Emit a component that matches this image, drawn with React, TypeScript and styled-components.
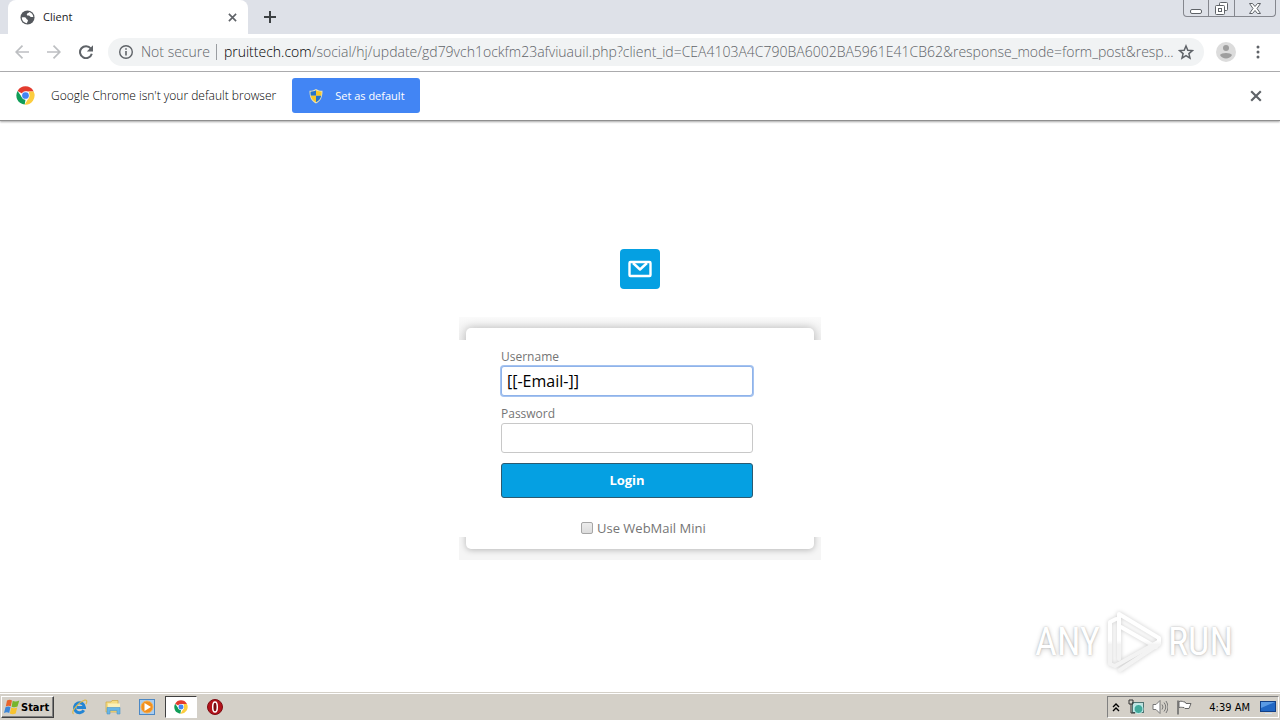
import React, { useState } from "react";
import styled, { createGlobalStyle, css } from "styled-components";

const uiFont = `"Open Sans", "Noto Sans", sans-serif`;

const GlobalStyle = createGlobalStyle`
  *, *::before, *::after { box-sizing: border-box; }
  body { margin: 0; background: #fff; font-family: ${uiFont}; color: #202124; }
  button, input { font-family: inherit; }
`;

const Screen = styled.div`
  min-height: 100vh;
  display: flex;
  flex-direction: column;
`;

const plainButton = css`
  display: flex;
  align-items: center;
  justify-content: center;
  padding: 0;
  border: 0;
  background: none;
  color: #5f6368;
`;

/* Tab strip */

const TabStrip = styled.header`
  display: flex;
  align-items: stretch;
  height: 34px;
  padding-left: 8px;
  background: #dee1e8;
`;

const Tab = styled.div`
  display: flex;
  align-items: center;
  gap: 8px;
  width: 240px;
  padding: 0 8px 0 12px;
  border-radius: 8px 8px 0 0;
  background: #fff;
  font-size: 11px;
  line-height: 16px;
`;

const TabTitle = styled.span`
  flex: 1;
`;

const IconButton = styled.button<{ $size?: number; $color?: string }>`
  ${plainButton}
  width: ${(p) => p.$size ?? 16}px;
  color: ${(p) => p.$color ?? "#5f6368"};
`;

const WindowButtons = styled.div`
  display: flex;
  height: 17px;
  margin: 0 4px 0 auto;
  border: 1px solid #85878e;
  border-top: 0;
  border-radius: 0 0 4px 4px;
`;

const WindowButton = styled.button<{ $width: number }>`
  ${plainButton}
  width: ${(p) => p.$width}px;
  & + & { border-left: 1px solid #85878e; }
`;

/* Toolbar */

const Toolbar = styled.nav`
  display: flex;
  align-items: center;
  height: 38px;
  padding: 0 12px 1px;
  border-bottom: 1px solid #b0b0b2;
`;

const NavButtons = styled.div`
  display: flex;
  gap: 12px;
  margin-right: 12px;
`;

const AddressBar = styled.div`
  flex: 1;
  min-width: 0;
  display: flex;
  align-items: center;
  height: 28px;
  padding: 0 8px 0 9px;
  border-radius: 14px;
  background: #f1f3f4;
  font-size: 14px;
  font-weight: 300;
  line-height: 20px;
  color: #5f6368;
  white-space: nowrap;
`;

const Security = styled.span`
  display: flex;
  align-items: center;
  gap: 6px;

  &::after {
    content: "";
    width: 1px;
    height: 16px;
    margin-right: 7px;
    background: #9a9da1;
  }
`;

const Url = styled.span`
  flex: 1;
`;

const Host = styled.span`
  color: #000;
`;

const ToolbarEnd = styled.div`
  display: flex;
  align-items: center;
  gap: 12px;
  margin-left: 12px;
`;

/* Info bar */

const InfoBar = styled.section`
  display: flex;
  align-items: center;
  height: 49px;
  padding: 0 16px 1px;
  border-bottom: 1px solid #8f8f8f;
  box-shadow: 0 1px 2px rgba(0, 0, 0, 0.35);
  font-size: 12px;
`;

const InfoText = styled.span`
  margin: 0 16px;
  font-weight: 300;
  color: #000;
`;

const DefaultButton = styled.button`
  display: flex;
  align-items: center;
  gap: 11px;
  height: 35px;
  padding: 0 15px 0 16px;
  border: 0;
  border-radius: 3px;
  background: #4285f4;
  color: #fff;
  font-size: 11px;
`;

const InfoClose = styled.div`
  margin-left: auto;
`;

/* Login page */

const Page = styled.main`
  position: relative;
  flex: 1;
  display: flex;
  flex-direction: column;
  align-items: center;
  padding: 128px 0 0;
`;

const MailLogo = styled.div`
  display: flex;
  align-items: center;
  justify-content: center;
  width: 40px;
  height: 40px;
  margin-bottom: 28px;
  border-radius: 4px;
  background: #05a0e2;
`;

const Card = styled.div`
  width: 362px;
`;

const CardEdge = styled.div<{ $bottom?: boolean }>`
  display: flex;
  align-items: ${(p) => (p.$bottom ? "flex-end" : "flex-start")};
  height: 23px;
  padding: ${(p) => (p.$bottom ? "0 7px 11px" : "11px 7px 0")};
  overflow: hidden;
  background: ${(p) => (p.$bottom ? "#f5f5f5" : "linear-gradient(#fafafa, #f0f0f0)")};

  &::before {
    content: "";
    flex: 1 0 auto;
    height: 40px;
    border-radius: 5px;
    background: #fff;
    box-shadow: 0 ${(p) => (p.$bottom ? "1px 6px" : "0 10px")} rgba(0, 0, 0, 0.26);
  }
`;

const Form = styled.form`
  display: flex;
  flex-direction: column;
  width: 294px;
  padding: 8px 0 0 42px;
`;

const Label = styled.label`
  font-size: 12px;
  line-height: 18px;
  color: #757575;
`;

const Field = styled.input`
  height: 30px;
  margin-bottom: 9px;
  padding: 0 5px;
  border: 1px solid #c8c8c8;
  border-radius: 3px;
  background: #fff;
  color: #000;
  font-size: 16px;

  &[type="text"] {
    border-color: #8fb3ea;
    box-shadow: 0 0 0 1px #a5c3f0;
  }
  &:focus { outline: none; }
`;

const LoginButton = styled.button`
  height: 35px;
  margin: 1px 0 21px;
  padding-bottom: 2px;
  border: 1px solid #2c5a70;
  border-radius: 3px;
  background: #05a0e2;
  color: #fff;
  font-size: 13px;
  font-weight: 700;
`;

const MiniRow = styled.label`
  display: flex;
  align-items: center;
  gap: 4px;
  height: 18px;
  padding: 0 0 1px 80px;
  font-size: 13px;
  color: #757575;
  white-space: nowrap;
`;

const Tick = styled.input`
  appearance: none;
  width: 12px;
  height: 12px;
  margin: 0;
  border: 1px solid #a6a6a6;
  border-radius: 2px;
  background: linear-gradient(#ececec, #dcdcdc);
  &:checked { background: #05a0e2; }
`;

const Watermark = styled.div`
  position: absolute;
  right: 47px;
  bottom: 18px;
  display: flex;
  align-items: center;
  gap: 6px;
  color: #fff;
  font-family: "Liberation Sans Narrow", "Roboto Condensed", "Liberation Sans", sans-serif;
  font-size: 38px;
  line-height: 64px;
  text-shadow: 0 0 2px rgba(0, 0, 0, 0.25), 0 1px 5px rgba(0, 0, 0, 0.2);
`;

const PlayMark = styled.svg`
  filter: drop-shadow(0 0 2px rgba(0, 0, 0, 0.2));
`;

/* Taskbar */

const Taskbar = styled.footer`
  display: flex;
  align-items: center;
  height: 28px;
  padding: 1px 1px 0;
  border-top: 1px solid #d4d0c8;
  background: #d4d0c8;
  box-shadow: inset 0 1px 0 #fff;
`;

const StartButton = styled.button`
  display: flex;
  align-items: center;
  gap: 1px;
  height: 22px;
  padding: 0 4px 0 2px;
  border: 1px solid;
  border-color: #fff #404040 #404040 #fff;
  background: #d4d0c8;
  box-shadow: inset -1px -1px 0 #808080;
  color: #000;
  font-family: "DejaVu Sans Condensed", "DejaVu Sans", sans-serif;
  font-size: 11px;
  font-weight: 700;
`;

const QuickLaunch = styled.div`
  display: flex;
  align-items: center;
  margin-left: 8px;
`;

const Launcher = styled.button<{ $active?: boolean }>`
  ${plainButton}
  width: ${(p) => (p.$active ? 32 : 34)}px;
  height: 22px;
  ${(p) =>
    p.$active &&
    css`
      margin: 0 1px;
      border: 1px solid;
      border-color: #404040 #fff #fff #404040;
      background: #fff;
    `}
`;

const Tray = styled.div`
  display: flex;
  align-items: center;
  gap: 8px;
  height: 22px;
  margin-left: auto;
  padding: 0 2px 0 4px;
  border: 1px solid;
  border-color: #808080 #fff #fff #808080;
  color: #000;
  font-family: "DejaVu Sans Condensed", "DejaVu Sans", sans-serif;
  font-size: 11px;
`;

const Clock = styled.time`
  margin: 0 2px 0 8px;
`;

interface SvgProps {
  w?: number;
  h?: number;
  box?: string;
  children: React.ReactNode;
}

const Svg = ({ w = 16, h = w, box = `0 0 ${w} ${h}`, children }: SvgProps) => (
  <svg width={w} height={h} viewBox={box} fill="none" stroke="currentColor" aria-hidden="true">
    {children}
  </svg>
);

const Cross = ({ size = 10 }: { size?: number }) => (
  <Svg w={size} box="0 0 10 10">
    <path d="M1 1l8 8M9 1l-8 8" strokeWidth="1.8" />
  </Svg>
);

const ChromeLogo = ({ size }: { size: number }) => (
  <Svg w={size} box="0 0 48 48">
    <g stroke="none">
      <path d="M24 24L4 12.500A23 23 0 0 1 44 12.500L44.500 14H24z" fill="#e33b2e" />
      <path d="M4 12.500L15.300 29 24 34 22 47A23 23 0 0 1 4 12.500z" fill="#109d58" />
      <path d="M44.500 14A23 23 0 0 1 22 47l10.700-18V14z" fill="#fccd3f" />
      <circle cx="24" cy="24" r="10.500" fill="#f4f8ff" />
      <circle cx="24" cy="24" r="8.500" fill="#4285f4" />
    </g>
  </Svg>
);

const ShieldIcon = () => (
  <Svg w={16}>
    <g stroke="none">
      <path d="M8 1c2 1.300 4 1.800 6.500 1.800C14.500 9 13 13 8 15.500 3 13 1.500 9 1.500 2.800 4 2.800 6 2.300 8 1z" fill="#e8e2b8" />
      <path d="M8 2.300v5.500H2.800c-.3-1.300-.3-2.500-.3-4C4.500 3.700 6.300 3.300 8 2.300z" fill="#2674cc" />
      <path d="M8 2.300c1.700 1 3.500 1.400 5.500 1.500 0 1.500 0 2.700-.3 4H8z" fill="#f8c828" />
      <path d="M2.800 7.800H8v6.500C5 12.800 3.300 10.500 2.800 7.800z" fill="#f8c828" />
      <path d="M13.200 7.800H8v6.500c3-1.500 4.700-3.800 5.200-6.500z" fill="#2674cc" />
    </g>
  </Svg>
);

const WindowsFlag = () => (
  <Svg w={16}>
    <g stroke="none">
      <path d="M3 1.500C5 .3 6.600.5 8 1.400L6.800 7.300C5.300 6.400 3.700 6.400 1.800 7.400z" fill="#e8642c" />
      <path d="M8.700 1.800c1.700.9 3.900.9 6.600-.2l-1.800 6c-2 1-3.900 1-5.900.1z" fill="#77b52d" />
      <path d="M1.500 8.200c1.900-1 3.500-1 5-.1l-1.300 5.900c-1.500-.9-3.400-.9-5.200.1z" fill="#3c86d8" />
      <path d="M7.300 8.500c1.800.9 3.700.9 5.900-.1l-1.500 6c-2 1-3.900 1-5.900.1z" fill="#f8c32e" />
    </g>
  </Svg>
);

export default function App() {
  const [email, setEmail] = useState("[[-Email-]]");
  return (
    <Screen>
      <GlobalStyle />
      <TabStrip>
        <Tab>
          <Svg w={15} box="0 0 16 16">
            <circle cx="8" cy="8" r="7.500" fill="#54585d" stroke="none" />
            <path d="M1.900 8c2-.5 4.600-.3 4.900 1.200.2 1.100 1.700.6 1.700 1.900 0 1-.9 1.300-1 2.900C4.200 13.800 2 11.300 1.900 8zM9.800 2.200C9.500 3.700 7.600 3 7.300 4.400c-.2 1.100.5 1.700 1.700 1.500 1.600-.2 1.600 1.300 2.700 1.500.9.200 1.700-.2 2.500.1C14 5 12.300 2.900 9.800 2.200z" fill="#fff" stroke="none" />
          </Svg>
          <TabTitle>Client</TabTitle>
          <IconButton aria-label="Close tab"><Cross size={9} /></IconButton>
        </Tab>
        <IconButton $size={44} $color="#3c4043" aria-label="New tab">
          <Svg w={12}><path d="M6 0v12M0 6h12" strokeWidth="2" /></Svg>
        </IconButton>
        <WindowButtons>
          <WindowButton $width={24} aria-label="Minimize">
            <Svg w={12} h={12}><rect x=".5" y="7.500" width="11" height="4" rx="1.500" fill="#fff" /></Svg>
          </WindowButton>
          <WindowButton $width={26} aria-label="Restore">
            <Svg w={13}><rect x="4.500" y=".5" width="8" height="8" rx="1" fill="#fff" /><rect x=".5" y="3.500" width="9" height="9" rx="1" fill="#fff" /><rect x="3.500" y="6.500" width="3" height="3" /></Svg>
          </WindowButton>
          <WindowButton $width={41} aria-label="Close">
            <Svg w={12} h={11}><path d="M.5.5h3L6 3.500 8.500.5h3L8 5.500l3.500 5h-3L6 7.500l-2.500 3h-3L4 5.500z" fill="#fff" /></Svg>
          </WindowButton>
        </WindowButtons>
      </TabStrip>

      <Toolbar>
        <NavButtons>
          <IconButton $size={20} $color="#bdbfc2" aria-label="Back">
            <Svg w={14} h={14}><path d="M14 7H1M7.500 .7L1.200 7l6.300 6.300" strokeWidth="1.700" /></Svg>
          </IconButton>
          <IconButton $size={20} $color="#bdbfc2" aria-label="Forward">
            <Svg w={14} h={14}><path d="M0 7h13M6.500 .7L12.800 7l-6.300 6.300" strokeWidth="1.700" /></Svg>
          </IconButton>
          <IconButton $size={20} aria-label="Reload">
            <Svg w={14} h={14}><path d="M11.800 3.500A6 6 0 1 0 12.800 8.800" strokeWidth="2" /><path d="M14 .3v6.200H7.800z" fill="currentColor" stroke="none" /></Svg>
          </IconButton>
        </NavButtons>
        <AddressBar>
          <Security>
            <Svg w={18}><circle cx="9" cy="9" r="6.300" strokeWidth="1.400" /><path d="M9 8v4.500M9 5.200v1.600" strokeWidth="1.600" /></Svg>
            Not secure
          </Security>
          <Url>
            <Host>pruittech.com</Host>/social/hj/update/gd79vch1ockfm23afviuauil.php?client_id=CEA4103A4C790BA6002BA5961E41CB62&amp;response_mode=form_post&amp;resp...
          </Url>
          <IconButton $size={20} aria-label="Bookmark this page">
            <Svg w={16}><path d="M8 2l1.800 4.200 4.600.4-3.500 3 1.100 4.500L8 11.700l-4 2.400 1.100-4.500-3.500-3 4.600-.4z" strokeWidth="1.500" /></Svg>
          </IconButton>
        </AddressBar>
        <ToolbarEnd>
          <IconButton $size={20} aria-label="Profile">
            <Svg w={20}>
              <g stroke="none"><circle cx="10" cy="10" r="10" fill="#dcdcdc" /><circle cx="10" cy="6" r="3" fill="#9e9e9e" /><path d="M4 13C5 10.300 15 10.300 16 13 14 17.500 6 17.500 4 13z" fill="#9e9e9e" /></g>
            </Svg>
          </IconButton>
          <IconButton $size={20} aria-label="Menu">
            <Svg w={4} h={14}><g fill="currentColor" stroke="none"><circle cx="2" cy="2" r="1.500" /><circle cx="2" cy="7" r="1.500" /><circle cx="2" cy="12" r="1.500" /></g></Svg>
          </IconButton>
        </ToolbarEnd>
      </Toolbar>

      <InfoBar>
        <ChromeLogo size={19} />
        <InfoText>Google Chrome isn't your default browser</InfoText>
        <DefaultButton><ShieldIcon />Set as default</DefaultButton>
        <InfoClose><IconButton aria-label="Dismiss"><Cross size={12} /></IconButton></InfoClose>
      </InfoBar>

      <Page>
        <MailLogo>
          <Svg w={24} h={18}>
            <g stroke="#fff" strokeWidth="2.400" strokeLinejoin="round"><rect x="1.500" y="2" width="21" height="14" rx="1" /><path d="M5 3l7 6.500L19 3" /></g>
          </Svg>
        </MailLogo>
        <Card>
          <CardEdge />
          <Form onSubmit={(e) => e.preventDefault()}>
            <Label htmlFor="username">Username</Label>
            <Field id="username" type="text" value={email} onChange={(e) => setEmail(e.target.value)} />
            <Label htmlFor="password">Password</Label>
            <Field id="password" type="password" />
            <LoginButton type="submit">Login</LoginButton>
            <MiniRow><Tick type="checkbox" />Use WebMail Mini</MiniRow>
          </Form>
          <CardEdge $bottom />
        </Card>
        <Watermark>
          <span>ANY</span>
          <PlayMark width="56" height="64" viewBox="0 0 56 64" aria-hidden="true">
            <defs>
              <linearGradient id="mark" x1="0" y1="0" x2="0" y2="64" gradientUnits="userSpaceOnUse">
                <stop offset=".48" stopColor="#fff" />
                <stop offset=".54" stopColor="#f3f3f3" />
              </linearGradient>
            </defs>
            <g fill="none" stroke="url(#mark)" strokeWidth="4" strokeLinejoin="round" strokeLinecap="round">
              <path d="M10 9L4 12v42l5 2L52 32" />
              <path d="M13 49V4l40 24v6L14 60" />
              <path d="M15 17l35 20" />
            </g>
          </PlayMark>
          <span>RUN</span>
        </Watermark>
      </Page>

      <Taskbar>
        <StartButton><WindowsFlag />Start</StartButton>
        <QuickLaunch>
          <Launcher aria-label="Internet Explorer">
            <Svg w={17} h={16}>
              <path d="M12.800 11.300A5 5 0 1 1 13.500 8.500H5.500" stroke="#2385d4" strokeWidth="3" />
              <path d="M2.500 15C-1 13 8 3 13.500 1.200c3-.7 2.500 2 1.500 4" stroke="#dcb84a" strokeWidth="1.200" />
            </Svg>
          </Launcher>
          <Launcher aria-label="Explorer">
            <Svg w={16}>
              <path d="M1 3h5l1-1.500h6V13H1z" fill="#f5dc83" stroke="#cfa944" strokeWidth=".7" />
              <path d="M3 4.500h12V9H3z" fill="#fbf0b8" stroke="none" />
              <path d="M2 8.500h13V15h-3v-3.500H5V15H2z" fill="#68b6e6" stroke="#4a94c8" strokeWidth=".6" />
            </Svg>
          </Launcher>
          <Launcher aria-label="Media Player">
            <Svg w={16}>
              <rect x=".5" y=".5" width="15" height="15" fill="#a9cdf0" stroke="#4c88c4" />
              <circle cx="8" cy="8" r="6" fill="#f2901e" stroke="#f9b050" />
              <path d="M5.500 4v8L12 8z" fill="#fff" stroke="none" />
            </Svg>
          </Launcher>
          <Launcher $active aria-label="Chrome"><ChromeLogo size={14} /></Launcher>
          <Launcher aria-label="Opera">
            <Svg w={16}>
              <circle cx="8" cy="8" r="7.500" fill="#b3121b" stroke="#7c0c12" />
              <ellipse cx="8" cy="8" rx="2.300" ry="5" fill="#7a0a10" stroke="#fff" strokeWidth="1.500" />
            </Svg>
          </Launcher>
        </QuickLaunch>
        <Tray>
          <Svg w={8} h={9}><path d="M1 4l3-3 3 3M1 8l3-3 3 3" stroke="#000" strokeWidth="1.400" /></Svg>
          <Svg w={16}>
            <rect x="4.500" y="3.500" width="11" height="10" fill="#bfe2e0" stroke="#4f7472" />
            <circle cx="10.500" cy="10" r="4.500" fill="#42a99b" stroke="#dff" strokeWidth=".8" />
            <path d="M1 1v4h4V1M3 5v9h4M2 0v2M4 0v2" stroke="#333" />
          </Svg>
          <Svg w={16}>
            <path d="M1 5.500h3l4-4v13l-4-4H1z" fill="#fff" stroke="#777" />
            <path d="M10 5.500q2 2.500 0 5M12 3.500q3.500 4.500 0 9M14 2q4 6 0 12" stroke="#777" />
          </Svg>
          <Svg w={17} h={16}>
            <path d="M2 1.500v14" stroke="#666" strokeWidth="1.500" />
            <path d="M3 2.500c3-1 4 .5 6 .5l1 1.500h5l-2 5h-4l-1-1c-2 0-3-.5-5 0z" fill="#fff" stroke="#666" />
          </Svg>
          <Clock>4:39 AM</Clock>
          <Svg w={16}>
            <rect x=".5" y="2.500" width="15" height="10" fill="#2167c4" stroke="#123f86" />
            <path d="M1 3h14L1 9z" fill="#5a9ae4" stroke="none" />
            <path d="M5 14.500h7" stroke="#cfe0f2" />
          </Svg>
        </Tray>
      </Taskbar>
    </Screen>
  );
}
